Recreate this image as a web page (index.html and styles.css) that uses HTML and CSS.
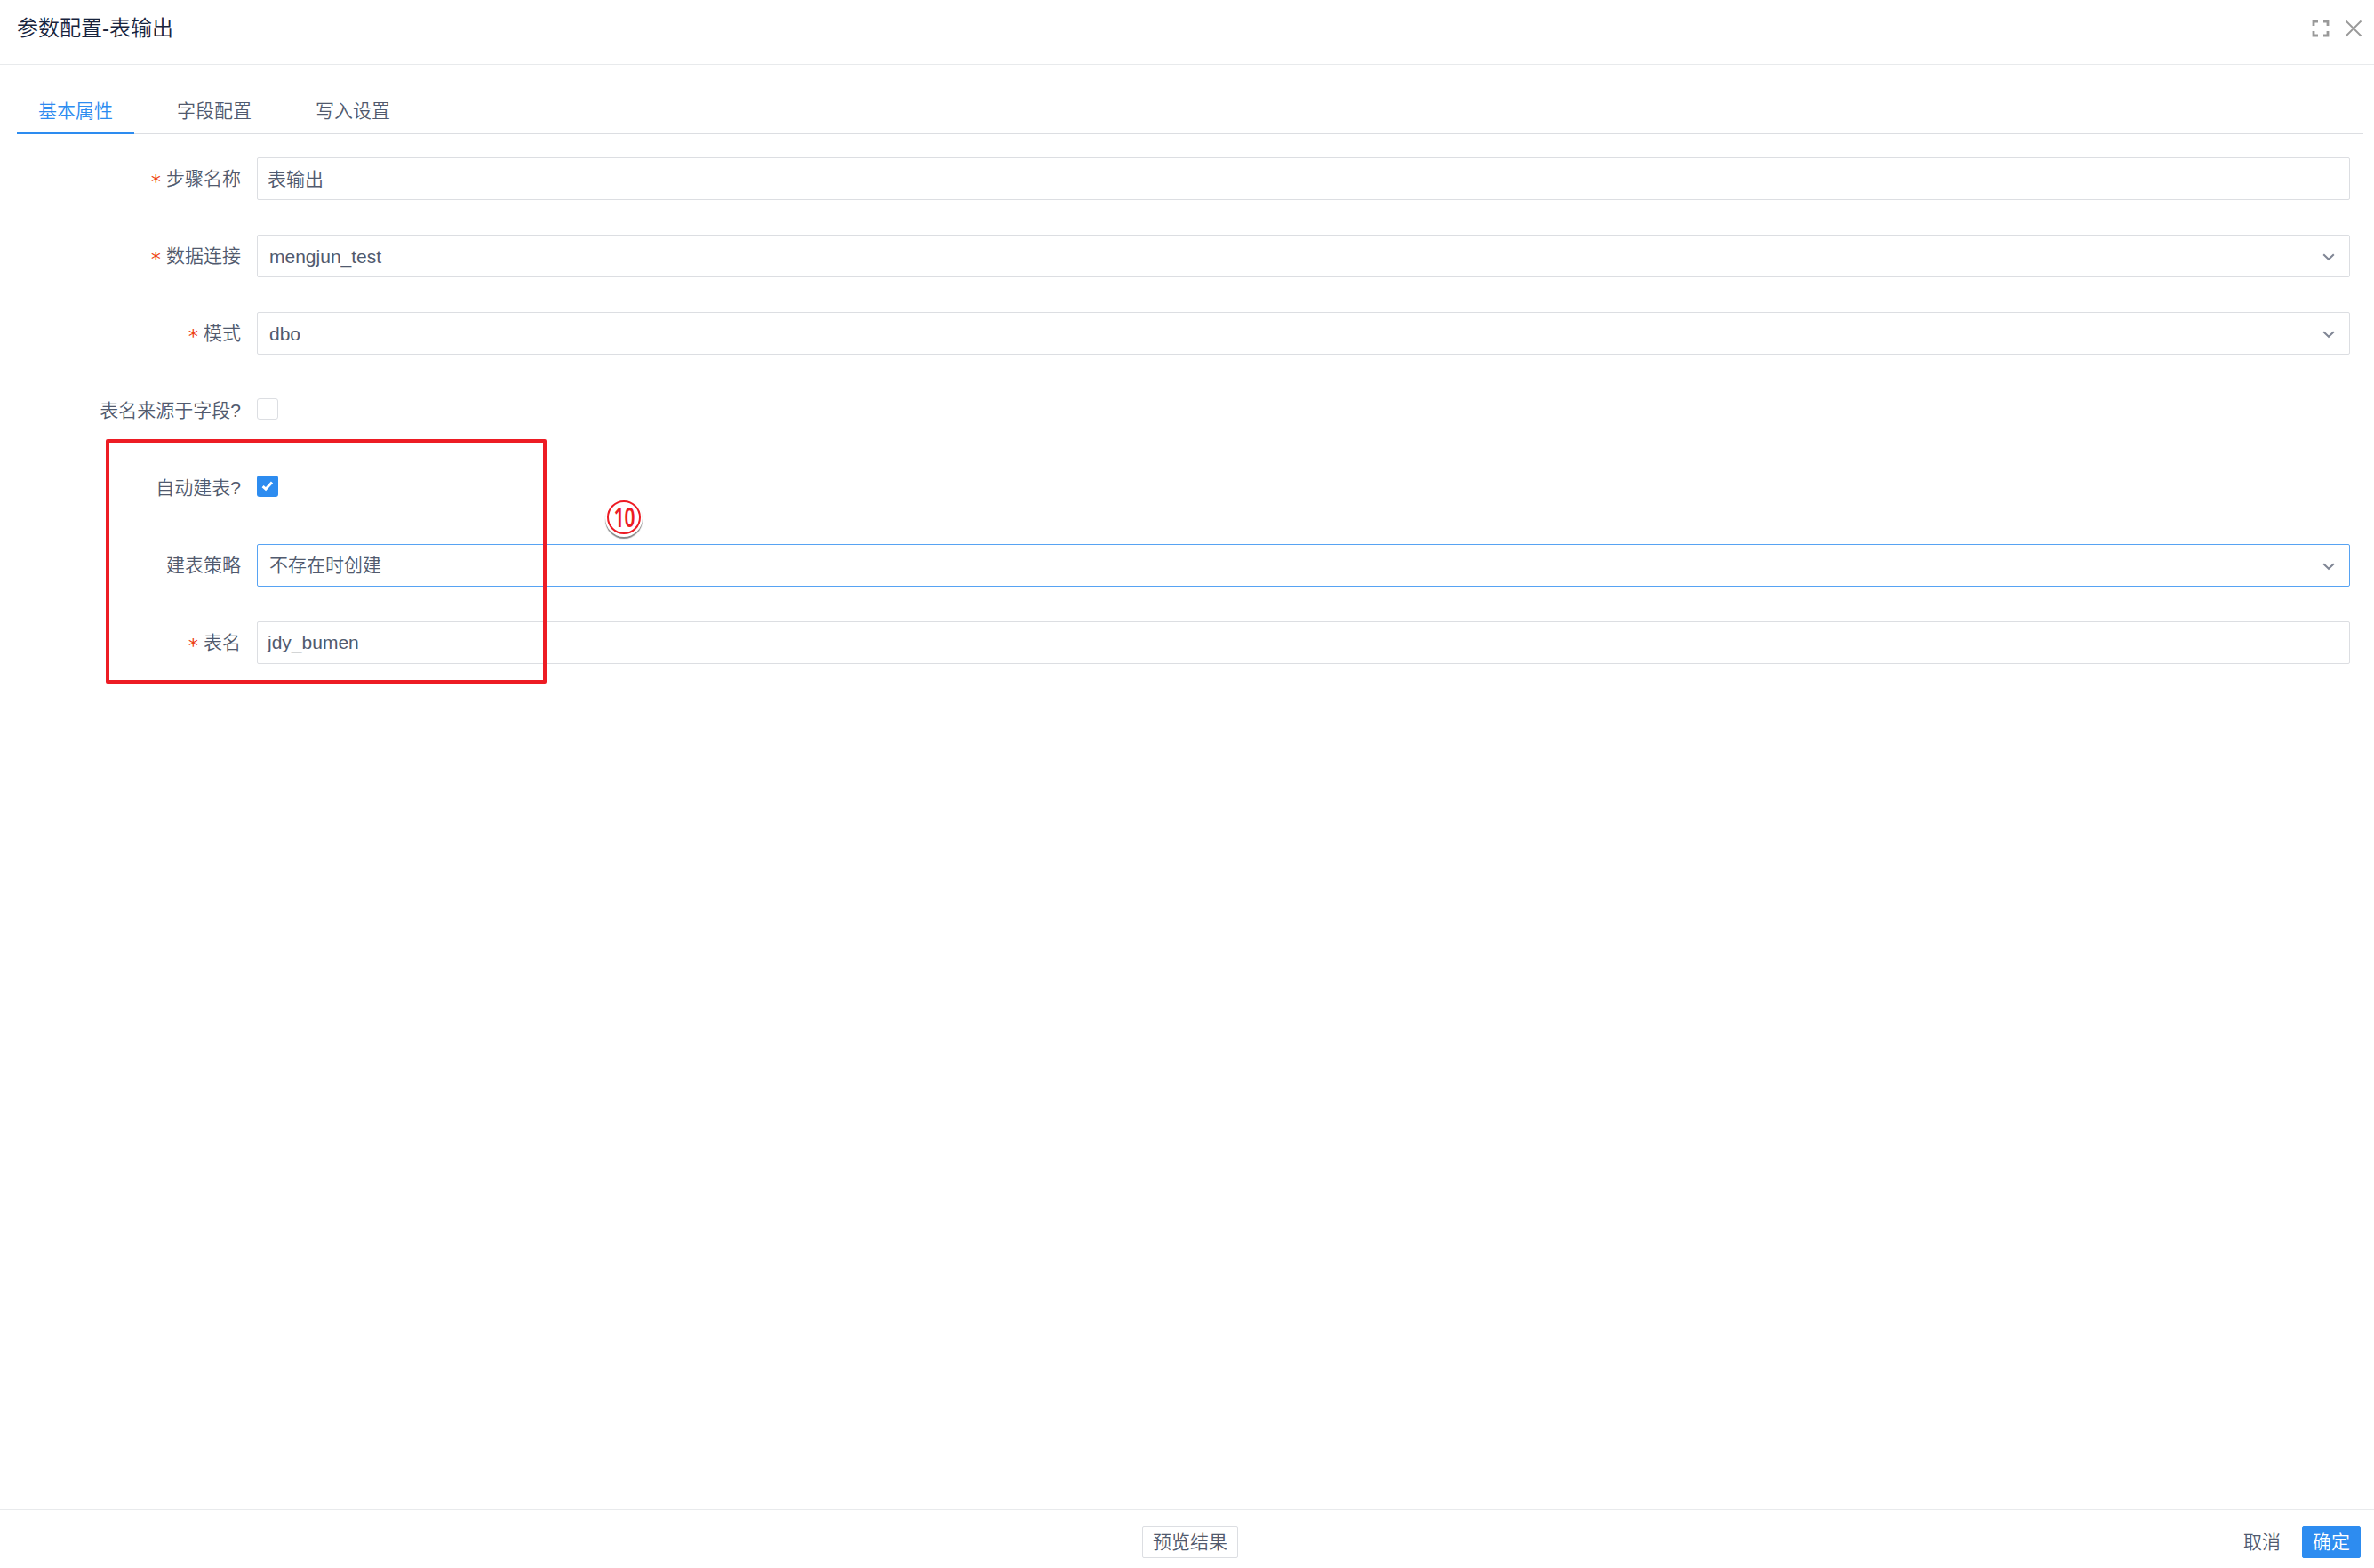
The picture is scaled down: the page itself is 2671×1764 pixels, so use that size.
FILE: index.html
```
<!DOCTYPE html>
<html lang="zh-CN">
<head>
    <meta charset="UTF-8">
    <title>参数配置-表输出</title>
    <link rel="stylesheet" href="styles.css">
</head>
<body>
    <div class="modal">
        <header class="modal-header">
            <h1>参数配置-表输出</h1>
            <div class="modal-tools">
                <svg class="icon-full" viewBox="0 0 20 20"><path d="M2 7V2H7M13 2H18V7M18 13V18H13M7 18H2V13"/></svg>
                <svg class="icon-close" viewBox="0 0 20 20"><path d="M1.5 1.5L18.5 18.5M18.5 1.5L1.5 18.5"/></svg>
            </div>
        </header>

        <nav class="tabs">
            <a class="tab active">基本属性</a>
            <a class="tab">字段配置</a>
            <a class="tab">写入设置</a>
        </nav>

        <form class="form">
            <div class="form-item">
                <label class="required">步骤名称</label>
                <div class="input">表输出</div>
            </div>
            <div class="form-item">
                <label class="required">数据连接</label>
                <div class="input select latin">mengjun_test
                    <svg class="arrow" viewBox="0 0 14 9"><path d="M1.2 1.2L7 6.8L12.8 1.2"/></svg>
                </div>
            </div>
            <div class="form-item">
                <label class="required">模式</label>
                <div class="input select latin">dbo
                    <svg class="arrow" viewBox="0 0 14 9"><path d="M1.2 1.2L7 6.8L12.8 1.2"/></svg>
                </div>
            </div>
            <div class="form-item">
                <label>表名来源于字段?</label>
                <span class="checkbox"></span>
            </div>
            <div class="form-item">
                <label>自动建表?</label>
                <span class="checkbox checked">
                    <svg viewBox="0 0 24 24"><path d="M6.6 12.2L10 15.2L17 7.6"/></svg>
                </span>
            </div>
            <div class="form-item">
                <label>建表策略</label>
                <div class="input select focus">不存在时创建
                    <svg class="arrow" viewBox="0 0 14 9"><path d="M1.2 1.2L7 6.8L12.8 1.2"/></svg>
                </div>
            </div>
            <div class="form-item">
                <label class="required">表名</label>
                <div class="input table-name">jdy_bumen</div>
            </div>
        </form>

        <footer class="modal-footer">
            <div class="footer-left"></div>
            <button class="btn" type="button">预览结果</button>
            <div class="footer-right">
                <button class="btn btn-text" type="button">取消</button>
                <button class="btn btn-primary" type="button">确定</button>
            </div>
        </footer>

        <!-- step marker over the form -->
        <div class="mark-box"></div>
        <div class="mark-step"><span>10</span></div>
    </div>
</body>
</html>
```
FILE: styles.css
```
* { box-sizing: border-box; }
body { margin: 0; background: #fff; color: #515a6e; font-family: "Liberation Sans", "Noto Sans CJK SC", sans-serif; font-size: 21px; font-weight: 350; }
.modal { position: relative; display: flex; flex-direction: column; height: 1764px; }
.modal-header { display: flex; justify-content: space-between; height: 73px; padding: 14px 13px 0 19px; border-bottom: 1px solid #e8eaec; }
h1 { margin: 0; font-size: 24px; font-weight: 350; line-height: 36px; color: #17233d; }
.modal-tools { display: flex; gap: 17px; padding-top: 8px; }
.modal-tools svg { width: 20px; height: 20px; fill: none; stroke: #999; }
.icon-full { stroke-width: 2.8; }
.icon-close { stroke-width: 1.8; }

.tabs { display: flex; gap: 24px; height: 54px; margin: 24px 12px 0 19px; border-bottom: 1px solid #dcdee2; }
.tab { width: 132px; height: 54px; padding-left: 24px; line-height: 55px; white-space: nowrap; }
.tab.active { color: #2d8cf0; border-bottom: 3px solid #2d8cf0; }

.form { flex: 1; padding: 26px 27px 0 0; }
.form-item { display: flex; height: 48px; margin-bottom: 39px; }
label { width: 289px; padding-right: 18px; text-align: right; line-height: 47px; white-space: nowrap; }
.required::before { content: "*"; margin-right: 5px; font-family: "DejaVu Sans Mono", monospace; font-size: 22px; font-weight: 400; line-height: 1; vertical-align: -4px; color: #ed4014; }
.input { flex: 1; height: 48px; padding: 0 11px; border: 1px solid #dcdee2; border-radius: 2px; line-height: 48px; }
.select { display: flex; justify-content: space-between; align-items: center; padding: 0 16px 0 13px; line-height: 46px; }
.select.latin { padding-top: 1px; }
.select.latin .arrow { margin-top: 1px; }
.select.focus { border-color: #57a3f3; }
.table-name { line-height: 46px; }
.arrow { width: 14px; height: 9px; margin-top: 2px; fill: none; stroke: #808695; stroke-width: 2; }
.checkbox { width: 24px; height: 24px; margin-top: 10px; border: 1px solid #dcdee2; border-radius: 3px; }
.checked { border: 0; background: #2d8cf0; }
.checked svg { display: block; fill: none; stroke: #fff; stroke-width: 3; }

.modal-footer { display: flex; align-items: flex-start; height: 66px; padding: 18px 15px 0; border-top: 1px solid #e8eaec; }
.footer-left { width: 1270px; }
.footer-right { display: flex; flex: 1; justify-content: flex-end; gap: 12px; }
.btn { height: 36px; padding: 0 11px; border: 1px solid #dcdee2; border-radius: 2px; background: #fff; color: #515a6e; font: inherit; line-height: 34px; white-space: nowrap; }
.btn-text { border-color: transparent; background: none; }
.btn-primary { border-color: #2d8cf0; background: #2d8cf0; color: #fff; }

.mark-box { position: absolute; left: 119px; top: 494px; width: 496px; height: 275px; border: 4px solid #ed1c24; border-radius: 2px; }
.mark-step { position: absolute; left: 683px; top: 563px; width: 38px; height: 38px; border: 2px solid #ed1c24; border-radius: 50%; background: #fff; box-shadow: 0 1px 0 2px #fff, 0 3px 1px 2px #888; }
.mark-step span { display: block; font-family: "Noto Sans", sans-serif; font-size: 31px; font-weight: 600; line-height: 32px; text-align: center; color: #ed1c24; transform: scaleX(0.68); }
```
